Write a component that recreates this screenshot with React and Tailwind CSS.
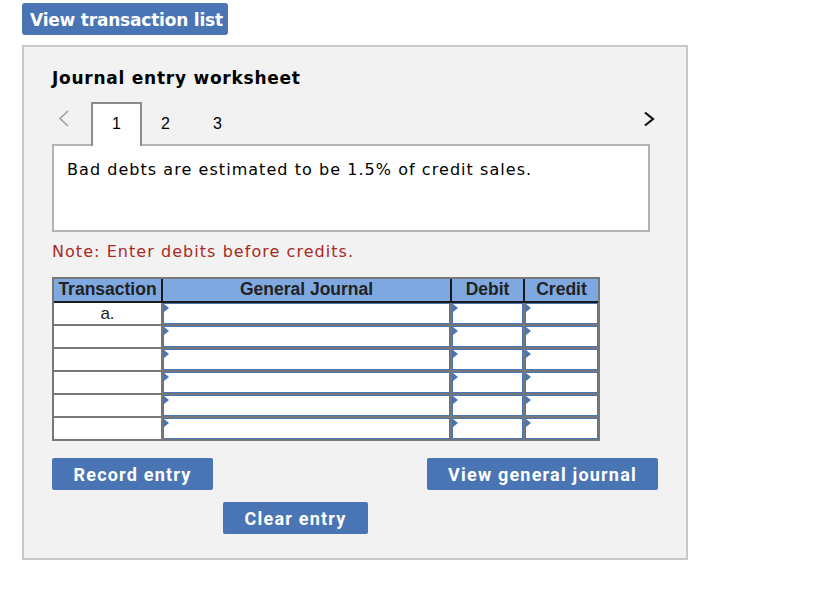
import React from "react";

const rows = [0, 1, 2, 3, 4, 5];

function Tri() {
  return (
    <svg className="absolute left-0 top-0" width="5" height="8" viewBox="0 0 5 8">
      <path d="M0 0 L5 4 L0 8 Z" fill="#4a75b5" />
    </svg>
  );
}

function InputCell() {
  return (
    <div className="relative bg-white border border-[#4a75b5] h-full">
      <Tri />
    </div>
  );
}

export default function App() {
  return (
    <div className="w-[820px] h-[602px] bg-white relative">
      <div className="pl-[22px] pt-[3px]">
        <div className="w-[206px] h-[32px] bg-[#4a75b5] rounded-[3px] flex items-center pl-[8px] pt-[3px] text-white font-bold text-[17px] font-['DejaVu_Sans',sans-serif] tracking-[-0.2px]">
          View transaction list
        </div>
        <div className="mt-[10px] w-[666px] h-[515px] bg-[#f2f2f2] border-2 border-[#c8c8c8] pl-[28px] pt-[20px]">
          <div className="font-['DejaVu_Sans',sans-serif] font-bold text-[17px] text-black h-[22px] leading-[22px] tracking-[0.75px]">
            Journal entry worksheet
          </div>
          <div className="mt-[13px] relative flex items-end h-[42px] w-[598px] font-['Liberation_Sans',sans-serif] text-[16px] text-black">
            <svg className="absolute left-[6px] top-[8px]" width="12" height="17" viewBox="0 0 12 17">
              <path d="M10 1 L2 8.5 L10 16" fill="none" stroke="#a0a0a0" strokeWidth="1.6" />
            </svg>
            <div className="absolute left-[39px] top-0 w-[51px] h-[44px] bg-white border-2 border-b-0 border-[#8c8c8c] flex justify-center pt-[8px] z-10">
              1
            </div>
            <div className="absolute left-[109px] top-[10px]">2</div>
            <div className="absolute left-[161px] top-[10px]">3</div>
            <svg className="absolute left-[590px] top-[9px]" width="14" height="16" viewBox="0 0 14 16">
              <path d="M3 1.5 L11 8 L3 14.5" fill="none" stroke="#111" strokeWidth="2.2" />
            </svg>
          </div>
          <div className="w-[598px] h-[88px] bg-white border-2 border-[#b3b3b3] pl-[13px] pt-[13px] font-['DejaVu_Sans',sans-serif] text-[16px] text-black leading-[22px] tracking-[1.05px]">
            Bad debts are estimated to be 1.5% of credit sales.
          </div>
          <div className="mt-[9px] font-['DejaVu_Sans',sans-serif] text-[16px] text-[#a82a23] leading-[22px] tracking-[1.05px]">
            Note: Enter debits before credits.
          </div>
          <div className="mt-[14px] w-[548px] border-2 border-[#777] bg-[#777] font-['Liberation_Sans',sans-serif]">
            <div className="grid grid-cols-[107px_2px_287px_2px_71px_2px_73px] h-[24px] bg-[#80a8e0] border-b-2 border-[#1a1a1a]">
              <div className="flex items-center justify-center font-bold text-[17.5px] text-[#222] leading-none">Transaction</div>
              <div className="bg-[#1a1a1a]" />
              <div className="flex items-center justify-center font-bold text-[17.5px] text-[#222] leading-none">General Journal</div>
              <div className="bg-[#1a1a1a]" />
              <div className="flex items-center justify-center font-bold text-[17.5px] text-[#222] leading-none">Debit</div>
              <div className="bg-[#1a1a1a]" />
              <div className="flex items-center justify-center font-bold text-[17.5px] text-[#222] leading-none">Credit</div>
            </div>
            <div className="flex flex-col gap-[2px]">
              {rows.map((r) => (
                <div key={r} className="grid grid-cols-[107px_2px_287px_2px_71px_2px_73px] h-[21px]">
                  <div className="bg-white flex items-center justify-center text-[17px] text-[#222] leading-none">
                    {r === 0 ? "a." : ""}
                  </div>
                  <div />
                  <InputCell />
                  <div />
                  <InputCell />
                  <div />
                  <InputCell />
                </div>
              ))}
            </div>
          </div>
          <div className="mt-[17px] w-[606px] relative h-[76px] font-['Roboto',sans-serif] font-bold text-[18px] tracking-[1.2px] text-white">
            <div className="absolute left-0 top-0 w-[161px] h-[32px] bg-[#4a75b5] rounded-[2px] flex items-center justify-center">
              Record entry
            </div>
            <div className="absolute left-[375px] top-0 w-[231px] h-[32px] bg-[#4a75b5] rounded-[2px] flex items-center justify-center">
              View general journal
            </div>
            <div className="absolute left-[171px] top-[44px] w-[145px] h-[32px] bg-[#4a75b5] rounded-[2px] flex items-center justify-center">
              Clear entry
            </div>
          </div>
        </div>
      </div>
    </div>
  );
}
